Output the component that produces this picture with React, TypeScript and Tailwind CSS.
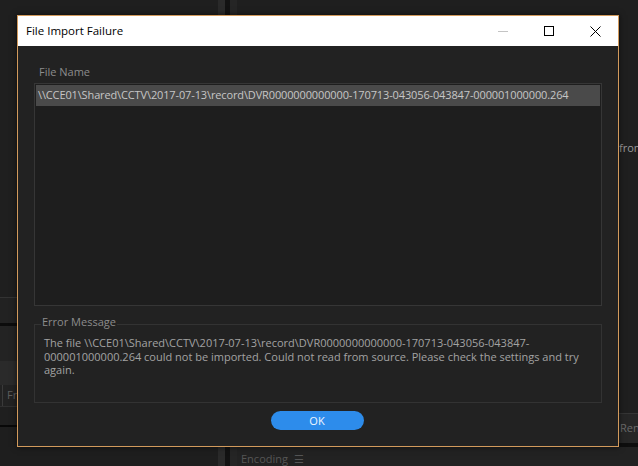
import React from "react";

function MinIcon() {
  return (
    <svg width="10" height="10" viewBox="0 0 10 10">
      <line x1="0" y1="5.5" x2="10" y2="5.5" stroke="#c4c4c4" strokeWidth="1" />
    </svg>
  );
}
function MaxIcon() {
  return (
    <svg width="10" height="10" viewBox="0 0 10 10">
      <rect x="0.5" y="0.5" width="9" height="9" fill="none" stroke="#000" strokeWidth="1" />
    </svg>
  );
}
function CloseIcon() {
  return (
    <svg width="11" height="11" viewBox="0 0 11 11">
      <path d="M0.5 0.5 L10.5 10.5 M10.5 0.5 L0.5 10.5" stroke="#000" strokeWidth="1" />
    </svg>
  );
}

export default function App() {
  return (
    <div className="relative w-[638px] h-[466px] overflow-hidden bg-[#1d1d1d] font-['Open_Sans','Noto_Sans',sans-serif]">
      {/* background application */}
      <div className="flex h-full">
        {/* left panel */}
        <div className="w-[218px] flex flex-col bg-[#1f1f1f]">
          <div className="h-[297px]" />
          <div className="h-[1px] bg-[#333333]" />
          <div className="h-[25px] bg-[#222222]" />
          <div className="h-[3px] bg-[#0c0c0c]" />
          <div className="h-[35px] bg-[#232323]" />
          <div className="h-[24px] bg-[#2a2a2a]" />
          <div className="h-[22px] flex items-center bg-[#222222] border-b border-[#303030]">
            <div className="w-[3px] h-full border-r border-[#3a3a3a]" />
            <span className="ml-[4px] text-[11px] text-[#5e5e5e]">Fr</span>
          </div>
          <div className="h-[18px] bg-[#1f1f1f]" />
          <div className="h-[2px] bg-[#080808]" />
          <div className="flex-1 bg-[#1e1e1e]" />
        </div>
        {/* divider */}
        <div className="w-[7px] bg-[#2a2a2a]" />
        <div className="w-[5px] bg-[#121212]" />
        <div className="w-[7px] bg-[#252525]" />
        {/* right panel */}
        <div className="flex-1 flex flex-col bg-[#1f1f1f] overflow-hidden">
          <div className="h-[140px]" />
          <p className="pl-[382px] text-[11px] leading-[16px] text-[#9a9a9a] whitespace-nowrap">from</p>
          <div className="flex-1" />
          <div className="h-[30px] border-t border-[#353535] bg-[#262626] flex items-center pl-[383px]">
            <span className="text-[11px] text-[#6a6a6a] whitespace-nowrap">Render</span>
          </div>
          <div className="h-[4px] bg-[#0e0e0e]" />
          <div className="h-[19px] bg-[#222222] flex items-center pt-[5px] pl-[4px] gap-[6px]">
            <span className="text-[11px] text-[#555555]">Encoding</span>
            <span className="text-[11px] text-[#555555]">☰</span>
          </div>
        </div>
      </div>

      {/* dialog */}
      <div className="absolute left-[17px] top-[15px] w-[602px] h-[432px] border border-[#d29a5c] bg-[#222222] flex flex-col shadow-[0_0_6px_rgba(0,0,0,0.6)]">
        <div className="h-[30px] bg-white flex items-center">
          <span className="ml-[8px] text-[11.5px] text-black flex-1">File Import Failure</span>
          <div className="w-[46px] h-full flex items-center justify-center"><MinIcon /></div>
          <div className="w-[46px] h-full flex items-center justify-center"><MaxIcon /></div>
          <div className="w-[46px] h-full flex items-center justify-center"><CloseIcon /></div>
        </div>
        <div className="flex-1 flex flex-col px-[16px]">
          <div className="mt-[19px] ml-[5px] text-[11px] leading-[14px] text-[#8c8c8c]">File Name</div>
          <div className="mt-[4px] h-[223px] border border-[#363636] bg-[#1e1e1e] p-[1px]">
            <div className="h-[21px] bg-[#4a4a4a] flex items-center pl-[2px] text-[11px] tracking-[-0.13px] text-[#c6c6c6] whitespace-nowrap">
              {"\\\\CCE01\\Shared\\CCTV\\2017-07-13\\record\\DVR0000000000000-170713-043056-043847-000001000000.264"}
            </div>
          </div>
          <div className="relative mt-[18px] h-[79px] border border-[#333333] px-[9px] pt-[11px]">
            <span className="absolute left-[6px] top-[-10px] bg-[#222222] px-[1px] text-[11px] leading-[14px] text-[#8c8c8c]">Error Message</span>
            <p className="text-[11px] leading-[13.5px] text-[#a2a2a2]">
              {"The file \\\\CCE01\\Shared\\CCTV\\2017-07-13\\record\\DVR0000000000000-170713-043056-043847-"}
              <br />
              {"000001000000.264 could not be imported. Could not read from source. Please check the settings and try"}
              <br />
              {"again."}
            </p>
          </div>
          <div className="mt-[8px] flex justify-center">
            <button className="w-[93px] h-[19px] -ml-[2px] rounded-full bg-[#2d8ceb] text-[11px] leading-[19px] text-[#eef5ff]">OK</button>
          </div>
        </div>
      </div>
    </div>
  );
}
